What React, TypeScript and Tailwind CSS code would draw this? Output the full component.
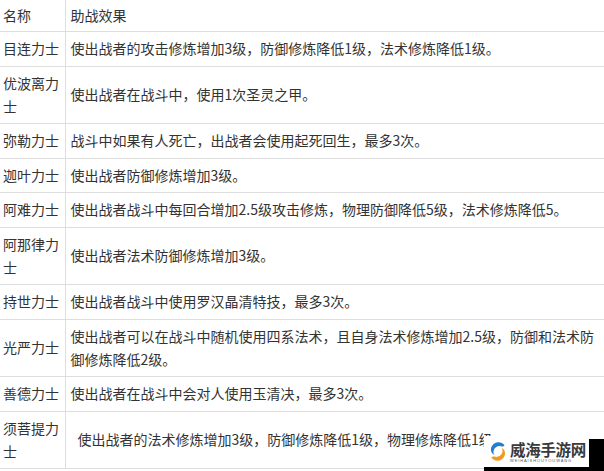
const rows: { name: string; effect: string; indent?: boolean }[] = [
  { name: '目连力士', effect: '使出战者的攻击修炼增加3级，防御修炼降低1级，法术修炼降低1级。' },
  { name: '优波离力士', effect: '使出战者在战斗中，使用1次圣灵之甲。' },
  { name: '弥勒力士', effect: '战斗中如果有人死亡，出战者会使用起死回生，最多3次。' },
  { name: '迦叶力士', effect: '使出战者防御修炼增加3级。' },
  { name: '阿难力士', effect: '使出战者战斗中每回合增加2.5级攻击修炼，物理防御降低5级，法术修炼降低5。' },
  { name: '阿那律力士', effect: '使出战者法术防御修炼增加3级。' },
  { name: '持世力士', effect: '使出战者战斗中使用罗汉晶清特技，最多3次。' },
  { name: '光严力士', effect: '使出战者可以在战斗中随机使用四系法术，且自身法术修炼增加2.5级，防御和法术防御修炼降低2级。' },
  { name: '善德力士', effect: '使出战者在战斗中会对人使用玉清决，最多3次。' },
  { name: '须菩提力士', effect: '使出战者的法术修炼增加3级，防御修炼降低1级，物理修炼降低1级。', indent: true },
]

// blue/orange swirl used by the site watermark
function SwirlLogo() {
  return (
    <svg width="18" height="21" viewBox="0 0 18 21">
      <path d="M15.5 4.2C13.8 1.9 10.6 0.8 7.6 1.6 3.6 2.7 1.2 6.6 2.2 10.3c0.5 1.8 1.7 3 3.2 3.6-0.9-1.2-1.2-2.8-0.7-4.4C5.6 6.6 8.6 4.7 11.8 5.2c1.4 0.2 2.7 0.7 3.7-1z" fill="#1f7fd0" />
      <path d="M2.5 16.8c1.7 2.3 4.9 3.4 7.9 2.6 4-1.1 6.4-5 5.4-8.7-0.5-1.8-1.7-3-3.2-3.6 0.9 1.2 1.2 2.8 0.7 4.4-0.9 2.9-3.9 4.8-7.1 4.3-1.4-0.2-2.7-0.7-3.7 1z" fill="#f39a1e" />
    </svg>
  )
}

export default function App() {
  return (
    <div
      className="relative h-[471px] w-[604px] overflow-hidden bg-white text-[14px] leading-[23px] text-[#333]"
      style={{ fontFamily: '"Noto Sans CJK SC", "Microsoft YaHei", sans-serif' }}
    >
      <table className="w-[604px] table-fixed border-collapse">
        <colgroup>
          <col className="w-[65px]" />
          <col />
        </colgroup>
        <thead>
          <tr className="border-b border-[#dedede]">
            <th className="border-r border-[#dedede] py-[4px] pl-[3px] text-left font-normal">名称</th>
            <th className="py-[4px] pl-[5px] text-left font-normal">助战效果</th>
          </tr>
        </thead>
        <tbody>
          {rows.map((r) => (
            <tr key={r.name} className="border-b border-[#dedede]">
              <td className="border-r border-[#dedede] py-[5.25px] pl-[3px] pr-[4px] align-middle">{r.name}</td>
              <td className={`py-[5.25px] pr-[5px] align-middle ${r.indent ? 'pl-[12px]' : 'pl-[5px]'}`}>{r.effect}</td>
            </tr>
          ))}
        </tbody>
      </table>

      {/* watermark */}
      <div className="absolute bottom-0 left-[484px] right-0 top-[439px] bg-black">
        <div className="absolute left-0 top-[-3px] flex h-[31px] w-[105px] items-center gap-[3px] bg-white pl-[5px]">
          <SwirlLogo />
          <div className="flex flex-col">
            <span className="text-[15.5px] font-bold leading-[17px] tracking-[-0.3px] text-[#3a3a3a]">威海手游网</span>
            <span className="text-[4px] leading-[5px] tracking-[0.9px] text-[#555]" style={{ fontFamily: '"Liberation Sans", sans-serif' }}>
              WEIHAISHOUYOUWANG
            </span>
          </div>
        </div>
      </div>
    </div>
  )
}
